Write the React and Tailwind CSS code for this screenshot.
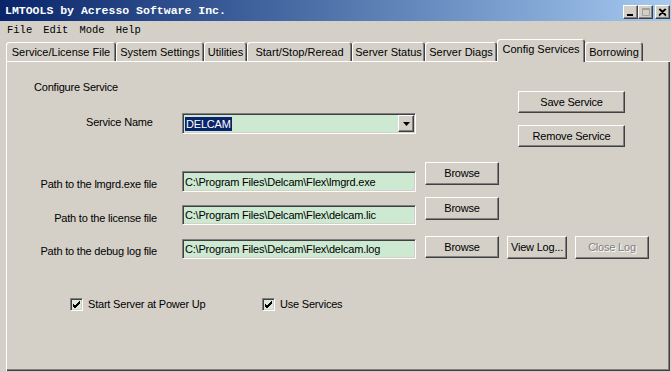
import React from "react";

const sunken =
  "border border-[#808080] border-b-white border-r-white shadow-[inset_1px_1px_0_#404040,inset_-1px_-1px_0_#d4d0c8]";
const raised =
  "border border-white border-r-[#404040] border-b-[#404040] shadow-[inset_-1px_-1px_0_#808080] flex items-center justify-center";

function Btn({ children, className = "", disabled }) {
  return (
    <div className={`${raised} ${className}`}>
      <span className={disabled ? "text-[#808080] [text-shadow:1px_1px_0_#fff]" : "text-black"}>{children}</span>
    </div>
  );
}

function TextBox({ value, className = "" }) {
  return (
    <div className={`${sunken} bg-[#cde9d1] flex items-center pl-[2px] w-[234px] ${className}`}>
      <span className="leading-[14px] whitespace-nowrap">{value}</span>
    </div>
  );
}

function Check({ label }) {
  return (
    <div className="flex items-center">
      <div className={`${sunken} w-[13px] h-[13px] bg-[#dde8dc] flex items-center justify-center`}>
        <svg width="9" height="9" viewBox="0 0 9 9">
          <path d="M1 4 L3 6 L8 1 M1 5 L3 7 L8 2 M1 6 L3 8 L8 3" stroke="#000" strokeWidth="1" fill="none" />
        </svg>
      </div>
      <span className="ml-[5px] leading-[14px]">{label}</span>
    </div>
  );
}

const tabs = [
  ["Service/License File", 110],
  ["System Settings", 88],
  ["Utilities", 43],
  ["Start/Stop/Reread", 105],
  ["Server Status", 73],
  ["Server Diags", 72],
  ["Config Services", 88, true],
  ["Borrowing", 58],
];

export default function App() {
  return (
    <div className="w-[671px] h-[372px] bg-[#d4d0c8] flex flex-col overflow-hidden font-['Liberation_Sans',Arial,sans-serif] text-[11px] tracking-[-0.2px] text-black">
      {/* title bar */}
      <div className="h-[21px] flex items-start pt-[4px] pl-[5px] pr-[1px] bg-linear-to-r from-[#0a246a] to-[#a6caf0]">
        <span className="font-['Liberation_Mono',monospace] font-bold text-[11.5px] leading-[14px] tracking-normal text-white">
          LMTOOLS by Acresso Software Inc.
        </span>
        <div className="ml-auto mt-[1px] flex">
          <div className={`${raised} w-[15px] h-[14px] bg-[#d4d0c8]`}>
            <svg width="9" height="9" viewBox="0 0 9 9"><rect x="1" y="6" width="6" height="2" fill="#000" /></svg>
          </div>
          <div className={`${raised} w-[15px] h-[14px] bg-[#d4d0c8]`}>
            <svg width="10" height="10" viewBox="0 0 10 10">
              <path d="M1.5 1.5h7v7h-7z M1 2.5h8" stroke="#a0a0a0" strokeWidth="1" fill="none" />
            </svg>
          </div>
          <div className={`${raised} w-[15px] h-[14px] bg-[#d4d0c8] ml-[2px]`}>
            <svg width="9" height="9" viewBox="0 0 9 9">
              <path d="M1 1L8 8M2 1L8 7M1 8L8 1M1 7L7 1" stroke="#000" strokeWidth="1.1" fill="none" />
            </svg>
          </div>
        </div>
      </div>

      {/* menu bar */}
      <div className="h-[19px] flex items-center gap-[11px] pl-[7px] font-['Liberation_Mono',monospace] text-[10.5px] tracking-normal">
        <span>File</span>
        <span>Edit</span>
        <span>Mode</span>
        <span>Help</span>
      </div>

      {/* tabs */}
      <div className="h-[22px] flex items-end pl-[6px] relative z-10 -mb-[1px]">
        {tabs.map(([name, w, sel]) => (
          <div
            key={name}
            style={{ width: w }}
            className={`flex items-center justify-center bg-[#d4d0c8] rounded-t-[3px] tracking-normal shadow-[inset_1px_1px_0_#fff,inset_-1px_0_0_#404040,inset_-2px_0_0_#808080] ${
              sel ? "h-[23px] pb-[2px]" : "h-[19px] mb-[1px] pt-[1px]"
            }`}
          >
            {name}
          </div>
        ))}
      </div>

      {/* panel */}
      <div className="flex-1 ml-[6px] mr-[1px] mb-[1px] flex flex-col pt-[19px] shadow-[inset_1px_1px_0_#fff,inset_-1px_-1px_0_#404040,inset_-2px_-2px_0_#808080]">
        <div className="flex">
          <div className="w-[506px] flex flex-col">
            <div className="pl-[28px] leading-[14px]">Configure Service</div>
            <div className="mt-[19px] flex items-center h-[21px]">
              <div className="w-[176px] pl-[80px] pb-[4px] leading-[14px]">Service Name</div>
              <div className={`${sunken} bg-[#cde9d1] w-[234px] h-[21px] flex items-center pl-[2px] pr-[1px]`}>
                <span className="bg-[#0a246a] text-white leading-[14px] px-[1px]">DELCAM</span>
                <div className={`${raised} ml-auto w-[16px] h-[17px] bg-[#d4d0c8]`}>
                  <svg width="7" height="4" viewBox="0 0 7 4"><path d="M0 0h7L3.5 4z" fill="#000" /></svg>
                </div>
              </div>
            </div>
          </div>
          <div className="ml-[6px] mt-[11px] flex flex-col gap-[12px]">
            <Btn className="w-[107px] h-[22px]">Save Service</Btn>
            <Btn className="w-[107px] h-[22px]">Remove Service</Btn>
          </div>
        </div>

        <div className="mt-[15px] flex items-start">
          <div className="w-[151px] text-right mt-[15px] leading-[14px]">Path to the lmgrd.exe file</div>
          <TextBox value="C:\Program Files\Delcam\Flex\lmgrd.exe" className="ml-[25px] mt-[9px] h-[21px]" />
          <Btn className="ml-[9px] w-[74px] h-[23px]">Browse</Btn>
        </div>

        <div className="mt-[5px] flex items-start">
          <div className="w-[151px] text-right mt-[14px] leading-[14px]">Path to the license file</div>
          <TextBox value="C:\Program Files\Delcam\Flex\delcam.lic" className="ml-[25px] mt-[8px] h-[20px]" />
          <Btn className="ml-[9px] w-[74px] h-[23px]">Browse</Btn>
        </div>

        <div className="mt-[11px] flex items-start">
          <div className="w-[151px] text-right mt-[8px] leading-[14px]">Path to the debug log file</div>
          <TextBox value="C:\Program Files\Delcam\Flex\delcam.log" className="ml-[25px] mt-[3px] h-[20px]" />
          <Btn className="ml-[9px] w-[74px] h-[22px]">Browse</Btn>
          <Btn className="ml-[8px] w-[60px] h-[23px]">View Log...</Btn>
          <Btn className="ml-[8px] w-[74px] h-[23px]" disabled>Close Log</Btn>
        </div>

        <div className="mt-[38px] flex items-center pl-[64px]">
          <div className="w-[192px]">
            <Check label="Start Server at Power Up" />
          </div>
          <Check label="Use Services" />
        </div>
      </div>
    </div>
  );
}
